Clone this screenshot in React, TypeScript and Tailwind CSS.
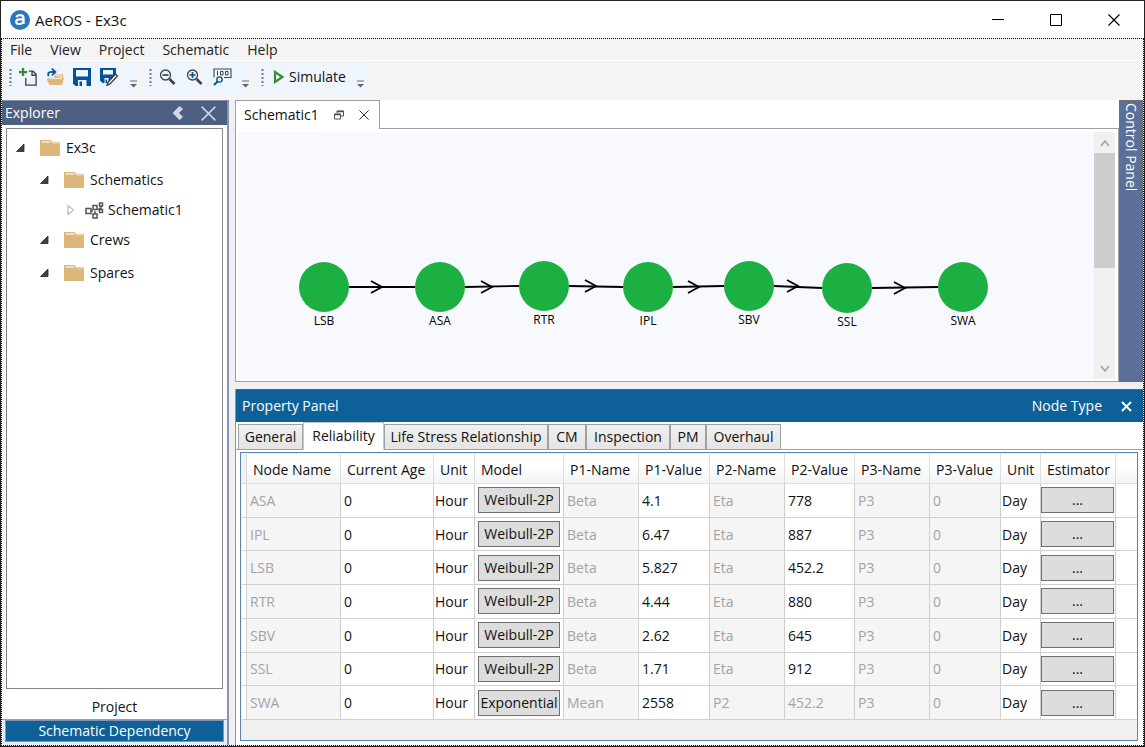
import React from 'react';
import clsx from 'clsx';

interface GridRow {
  name: string;
  model: string;
  p1Name: string;
  p1: string;
  p2Name: string;
  p2: string;
}

const rows: GridRow[] = [
  { name: 'ASA', model: 'Weibull-2P', p1Name: 'Beta', p1: '4.1', p2Name: 'Eta', p2: '778' },
  { name: 'IPL', model: 'Weibull-2P', p1Name: 'Beta', p1: '6.47', p2Name: 'Eta', p2: '887' },
  { name: 'LSB', model: 'Weibull-2P', p1Name: 'Beta', p1: '5.827', p2Name: 'Eta', p2: '452.2' },
  { name: 'RTR', model: 'Weibull-2P', p1Name: 'Beta', p1: '4.44', p2Name: 'Eta', p2: '880' },
  { name: 'SBV', model: 'Weibull-2P', p1Name: 'Beta', p1: '2.62', p2Name: 'Eta', p2: '645' },
  { name: 'SSL', model: 'Weibull-2P', p1Name: 'Beta', p1: '1.71', p2Name: 'Eta', p2: '912' },
  { name: 'SWA', model: 'Exponential', p1Name: 'Mean', p1: '2558', p2Name: 'P2', p2: '452.2' },
];

const headers = [
  'Node Name',
  'Current Age',
  'Unit',
  'Model',
  'P1-Name',
  'P1-Value',
  'P2-Name',
  'P2-Value',
  'P3-Name',
  'P3-Value',
  'Unit',
  'Estimator',
];

// Centres of the nodes on the schematic canvas, arrow = x of the arrow tip on the way to the next one
const nodes = [
  { label: 'LSB', x: 86, y: 155, arrow: 144 },
  { label: 'ASA', x: 202, y: 155, arrow: 254 },
  { label: 'RTR', x: 306, y: 154, arrow: 358 },
  { label: 'IPL', x: 410, y: 155, arrow: 461 },
  { label: 'SBV', x: 511, y: 154, arrow: 560 },
  { label: 'SSL', x: 609, y: 156, arrow: 667 },
  { label: 'SWA', x: 725, y: 155 },
];

const Logo = () => (
  <svg width="20" height="20" viewBox="0 0 20 20" aria-hidden="true">
    <circle cx="10" cy="10" r="10" fill="#2a75bb" />
    <path
      d="M6.2 7.2C7 5.7 8.3 5.2 10 5.2c2.400 0 3.600 1.100 3.600 3.300V14M13.400 9.300H9.300c-2 0-3.100.8-3.100 2.300s1 2.400 2.700 2.400c2.400 0 4.500-1.200 4.500-3.200"
      fill="none"
      stroke="#fff"
      strokeWidth="2.2"
    />
  </svg>
);

const NewIcon = () => (
  <svg width="18" height="18" viewBox="0 0 20 20" aria-hidden="true">
    <path d="M9.500 4H15l3.500 3.500V19h-11v-8.500l2-1.500z" fill="#f2f2f2" />
    <path d="M4.500 0v9M0 4.500h9" stroke="#388a34" strokeWidth="2.600" />
    <path d="M11 3.500h4.500L19 7v12H7.500v-8M14.500 3.500V8H19" fill="none" stroke="#424242" strokeWidth="1.500" />
  </svg>
);

const OpenIcon = () => (
  <svg width="18" height="18" viewBox="0 0 20 20" aria-hidden="true">
    <path d="M10 7h9v3.500h1L18 19H4l-3.500-7H3v-1.500h6z" fill="#dcb67a" />
    <path d="M4.500 11.500H17v-3h-6" fill="none" stroke="#f5e8d0" strokeWidth="1.300" />
    <path d="M3 9C1 5 4 3.800 9 4.500" fill="none" stroke="#00539c" strokeWidth="1.900" />
    <path d="m6.500.8 4 3.700-4 3.700" fill="none" stroke="#00539c" strokeWidth="1.900" />
  </svg>
);

const SaveIcon = () => (
  <svg width="18" height="18" viewBox="0 0 18 18" aria-hidden="true">
    <path d="M0 0h18v18H2.500L0 15.500z" fill="#00539c" />
    <path d="M3 2h12v6.500H3zM5 12h8.500v6H5z" fill="#f0f5fc" />
    <path d="M6.500 13.500H9V18H6.500z" fill="#00539c" />
  </svg>
);

const SaveAsIcon = () => (
  <svg width="18" height="18" viewBox="0 0 18 18" aria-hidden="true">
    <path d="M0 0h16v8l-7 7H2.500L0 12.500z" fill="#00539c" />
    <path d="M3 2h10v4.500H3zM4.500 10h4v5h-4z" fill="#f0f5fc" />
    <path d="M5.500 11.500H7V15H5.500z" fill="#00539c" />
    <path d="M8 14.200 15.500 6l2 2-7.500 8-3 1.300z" fill="#f4f8fd" stroke="#424242" strokeWidth="1.400" />
  </svg>
);

const ZoomIcon = ({ plus = false }: { plus?: boolean }) => (
  <svg width="18" height="18" viewBox="0 0 18 18" aria-hidden="true">
    <circle cx="6.500" cy="7" r="5" fill="#f4f4f8" stroke="#424242" strokeWidth="1.300" />
    <path d="m10.500 11 5 5" stroke="#424242" strokeWidth="2.600" />
    <path d={plus ? 'M3.500 7h6M6.500 4v6' : 'M3.500 7h6'} stroke="#00539c" strokeWidth="1.700" />
  </svg>
);

const ZoomResetIcon = () => (
  <svg width="19" height="18" viewBox="0 0 19 18" aria-hidden="true">
    <path d="M1 9.500V1h17v8.500h-7" fill="none" stroke="#424242" strokeWidth="1.100" />
    <path d="M4.500 3v4.500M7.500 3.500H10V7H7.500zM12.500 3.500H15V7h-2.500z" fill="none" stroke="#424242" strokeWidth="1" />
    <circle cx="6.500" cy="11.500" r="2.600" fill="none" stroke="#00539c" strokeWidth="1.400" />
    <path d="m4.500 13.500-3.500 3.500" stroke="#00539c" strokeWidth="2" />
  </svg>
);

const FolderIcon = () => (
  <svg width="20" height="18" viewBox="0 0 20 18" aria-hidden="true">
    <path d="M0 1h10.500l1.500 2H20v14H0z" fill="#dcb67a" />
    <path d="M1.500 3h9" stroke="#f8efdf" strokeWidth="1.400" />
    <path d="M12 4h8" stroke="#f3e2c4" strokeWidth="1" />
  </svg>
);

const SchematicIcon = () => (
  <svg width="19" height="17" viewBox="0 0 19 17" aria-hidden="true">
    <g fill="#fff" stroke="#555" strokeWidth="1.500">
      <path d="M6 9h2M10 7V5M10 9v3M13 8l2-2M16 4v4" fill="none" />
      <path d="M1 6.500h5v5H1zM8 3.500h4v4H8zM8 12h4v4H8zM14.500 1h3v3h-3zM14.500 7.500h3v3h-3z" />
    </g>
  </svg>
);

const Expander = ({ open = false }: { open?: boolean }) => (
  <svg width="10" height="12" viewBox="0 0 10 12" aria-hidden="true">
    {open ? (
      <path d="M8 2v7.500H.5z" fill="#404040" stroke="#262626" strokeWidth="0.800" />
    ) : (
      <path d="M2 1.500v9L7.500 6z" fill="#fff" stroke="#a0a0a0" strokeWidth="1" />
    )}
  </svg>
);

const Cross = ({ size, className }: { size: number; className: string }) => (
  <svg width={size} height={size} viewBox="0 0 12 12" className={className} aria-hidden="true">
    <path d="m.5.5 11 11M11.500.5l-11 11" fill="none" stroke="currentColor" strokeWidth="1.200" />
  </svg>
);

const Chevron = ({ down = false }: { down?: boolean }) => (
  <svg width="10" height="8" viewBox="0 0 10 8" aria-hidden="true">
    <path d={down ? 'm1 1 4 5 4-5' : 'm1 7 4-5 4 5'} fill="none" stroke="#a3a3a3" strokeWidth="1.700" />
  </svg>
);

interface ToolbarGroupProps {
  className?: string;
  children: React.ReactNode;
}

const ToolbarGroup = ({ className = '', children }: ToolbarGroupProps) => (
  <div role="toolbar" className={clsx('flex h-8 items-center rounded bg-[#eef5fd] pl-1', className)}>
    <svg width="3" height="18" viewBox="0 0 3 18" className="mr-[7px] shrink-0" aria-hidden="true">
      <path d="M1.500 1v17" stroke="#777" strokeWidth="2" strokeDasharray="2 2" />
    </svg>
    {children}
    <button type="button" aria-label="Toolbar options" className="mt-[14px] mr-[3px] ml-auto">
      <svg width="7" height="8" viewBox="0 0 7 8" aria-hidden="true">
        <path d="M0 1h7" stroke="#666" />
        <path d="M0 4h7L3.500 7.500z" fill="#666" />
      </svg>
    </button>
  </div>
);

const TitleBar = () => (
  <header className="flex h-[37px] shrink-0 items-center bg-white pl-[9px]">
    <Logo />
    <h1 className="ml-[5px] text-[15px]">AeROS - Ex3c</h1>
    <div className="ml-auto flex items-center gap-[46px] pr-6 text-black">
      <button type="button" aria-label="Minimize">
        <svg width="12" height="12" viewBox="0 0 12 12" aria-hidden="true">
          <path d="M0 5.500h12" stroke="currentColor" />
        </svg>
      </button>
      <button type="button" aria-label="Maximize">
        <svg width="12" height="12" viewBox="0 0 12 12" aria-hidden="true">
          <path d="M.5.5h11v11H.5z" fill="none" stroke="currentColor" />
        </svg>
      </button>
      <button type="button" aria-label="Close">
        <Cross size={12} className="text-black" />
      </button>
    </div>
  </header>
);

const Toolbar = () => (
  <div className="flex h-[39px] shrink-0 gap-[5px] pl-[3px]">
    <ToolbarGroup className="w-[135px]">
      <div className="flex gap-[9px]">
        <button type="button" aria-label="New"><NewIcon /></button>
        <button type="button" aria-label="Open"><OpenIcon /></button>
        <button type="button" aria-label="Save"><SaveIcon /></button>
        <button type="button" aria-label="Save as"><SaveAsIcon /></button>
      </div>
    </ToolbarGroup>
    <ToolbarGroup className="w-[107px]">
      <div className="flex gap-[9px]">
        <button type="button" aria-label="Zoom out"><ZoomIcon /></button>
        <button type="button" aria-label="Zoom in"><ZoomIcon plus /></button>
        <button type="button" aria-label="Zoom to 100"><ZoomResetIcon /></button>
      </div>
    </ToolbarGroup>
    <ToolbarGroup className="w-[110px]">
      <button type="button" className="flex items-center gap-1 pl-[2px]">
        <svg width="12" height="14" viewBox="0 0 12 14" aria-hidden="true">
          <path d="M2 2v10l7.500-5z" fill="#eef5fd" stroke="#388a34" strokeWidth="2.200" />
        </svg>
        Simulate
      </button>
    </ToolbarGroup>
  </div>
);

interface TreeItemProps {
  label: string;
  icon?: React.ReactNode;
  open?: boolean;
  className: string;
}

const TreeItem = ({ label, icon = <FolderIcon />, open = true, className }: TreeItemProps) => (
  <li role="treeitem" aria-expanded={open} className={clsx('flex items-center', className)}>
    <Expander open={open} />
    {icon}
    <span>{label}</span>
  </li>
);

const Explorer = () => (
  <aside className="flex w-[227px] shrink-0 flex-col border-r-2 border-[#8593b3] bg-white">
    <div className="flex h-[25px] shrink-0 items-center border-t border-[#8593b3] bg-[#4d6082] pl-[3px] text-white">
      <h2>Explorer</h2>
      <button type="button" aria-label="Collapse" className="ml-auto">
        <svg width="12" height="14" viewBox="0 0 12 14" aria-hidden="true">
          <path d="m7.500 0 3.500 3L7 7l4 4-3.500 3L.5 7z" fill="#cfd6e8" />
        </svg>
      </button>
      <button type="button" aria-label="Close explorer" className="mr-[11px] ml-[17px]">
        <Cross size={15} className="text-[#cfd6e8]" />
      </button>
    </div>
    <ul role="tree" className="mx-1 mt-[3px] flex-1 border border-[#828790] pt-[3px]">
      <TreeItem label="Ex3c" className="h-8 gap-[6px] pl-[9px] [&>svg:first-child]:mr-2" />
      <TreeItem label="Schematics" className="h-8 gap-[6px] pl-[33px] [&>svg:first-child]:mr-2" />
      <TreeItem label="Schematic1" open={false} icon={<SchematicIcon />} className="h-7 gap-1 pl-[59px] [&>svg:first-child]:mr-[5px]" />
      <TreeItem label="Crews" className="h-8 gap-[6px] pl-[33px] [&>svg:first-child]:mr-2" />
      <TreeItem label="Spares" className="h-[34px] gap-[6px] pl-[33px] [&>svg:first-child]:mr-2" />
    </ul>
    <div className="mt-1 flex shrink-0 flex-col">
      <button type="button" className="h-[27px] border-b border-[#a0a0a0] pt-[2px]">Project</button>
      <div className="bg-[#e6ebf8] px-[3px] pb-[3px]">
        <button type="button" className="h-[22px] w-full border border-[#8593b3] bg-[#0e6198] leading-5 text-white">
          Schematic Dependency
        </button>
      </div>
    </div>
  </aside>
);

const Schematic = () => (
  <svg className="h-full w-full" role="img" aria-label="Schematic1 diagram">
    {nodes.slice(0, -1).map((node, i) => (
      <g key={node.label} fill="none" stroke="#000" strokeWidth="1.800">
        <line x1={node.x + 25} y1={node.y} x2={nodes[i + 1].x - 25} y2={nodes[i + 1].y} />
        <path d={`M${(node.arrow ?? 0) - 11} ${node.y - 6}l11 6l-11 6`} />
      </g>
    ))}
    {nodes.map((node) => (
      <g key={node.label}>
        <circle cx={node.x} cy={node.y} r="25" fill="#1caf42" />
        <text x={node.x} y={node.y + 38} textAnchor="middle" fontSize="12" fill="#000">
          {node.label}
        </text>
      </g>
    ))}
  </svg>
);

const DocumentArea = () => (
  <section className="flex min-w-0 flex-1 flex-col bg-white">
    <div className="flex h-[29px] shrink-0">
      <div className="flex w-[145px] items-center border-t border-r border-l border-[#a0a0a0] pl-2">
        <span>Schematic1</span>
        <button type="button" aria-label="Float" className="ml-auto">
          <svg width="10" height="10" viewBox="0 0 10 10" aria-hidden="true">
            <path d="M3 3V1h6.500v5H7" fill="none" stroke="#555" />
            <path d="M3 1.500h6.500M.5 4.500H7" stroke="#555" strokeWidth="1.500" />
            <path d="M.5 4h6v5h-6z" fill="none" stroke="#555" />
          </svg>
        </button>
        <button type="button" aria-label="Close Schematic1" className="mr-[10px] ml-[15px]">
          <Cross size={10} className="text-[#333]" />
        </button>
      </div>
      <div className="flex-1 border-b border-[#a0a0a0]" />
    </div>
    <div className="flex min-h-0 flex-1 border-r border-b border-l border-[#a0a0a0] p-[2px] pt-[3px]">
      <div className="min-w-0 flex-1 bg-[#f8f9ff]">
        <Schematic />
      </div>
      <div className="mr-px flex w-[21px] flex-col bg-[#f0f0f0]">
        <button type="button" aria-label="Scroll up" className="flex h-[21px] items-center justify-center">
          <Chevron />
        </button>
        <div className="h-[115px] bg-[#cdcdcd]" />
        <button type="button" aria-label="Scroll down" className="mt-auto flex h-[21px] items-center justify-center">
          <Chevron down />
        </button>
      </div>
    </div>
  </section>
);

const tabs = ['General', 'Reliability', 'Life Stress Relationship', 'CM', 'Inspection', 'PM', 'Overhaul'];
const tabWidths = ['w-[65px]', 'w-[81px]', 'w-[164px]', 'w-[38px]', 'w-[84px]', 'w-[36px]', 'w-[75px]'];

const PropertyTabs = () => (
  <div role="tablist" className="flex h-7 shrink-0 items-end border-b border-[#a0a0a0] pl-[2px]">
    {tabs.map((tab, i) => {
      const active = tab === 'Reliability';
      return (
        <button
          key={tab}
          type="button"
          role="tab"
          aria-selected={active}
          className={clsx(
            'shrink-0 border whitespace-nowrap',
            tabWidths[i],
            active
              ? '-mb-px h-7 border-[#c8c8c8] border-b-white bg-white'
              : 'h-[25px] border-b-0 border-[#a0a0a0] bg-linear-to-b from-[#f0f0f0] to-[#e4e4e4]'
          )}
        >
          {tab}
        </button>
      );
    })}
  </div>
);

const Cell = ({ value, muted = false }: { value: string; muted?: boolean }) => (
  <td className={clsx('border-r border-b border-[#d0d0d0] px-[3px] pt-px pb-0', muted && 'bg-[#f5f5f5] text-[#a3a3a3]')}>
    {value}
  </td>
);

const PropertyGrid = () => (
  <div className="mt-[2px] mr-[5px] mb-1 ml-1 min-h-0 flex-1 overflow-hidden border border-[#5c84ac] bg-[#f0f0f0] pt-px pl-px">
    <table className="h-[266px] w-full table-fixed border-separate border-spacing-0 bg-white text-left">
      <colgroup>
        <col className="w-[5px]" />
        <col className="w-[94px]" />
        <col className="w-[93px]" />
        <col className="w-[41px]" />
        <col className="w-[89px]" />
        <col className="w-[75px]" />
        <col className="w-[71px]" />
        <col className="w-[75px]" />
        <col className="w-[70px]" />
        <col className="w-[75px]" />
        <col className="w-[71px]" />
        <col className="w-[40px]" />
        <col className="w-[75px]" />
        <col />
      </colgroup>
      <thead>
        <tr className="h-[30px]">
          <td className="border-r border-b border-[#d8d8d8] bg-[#f2f2f4] p-0" />
          {headers.map((header, i) => (
            <th
              key={i}
              scope="col"
              className="border-r border-b border-[#dcdee2] bg-linear-to-b from-white from-40% to-[#f1f3f6] pt-[2px] pr-0 pb-0 pl-[6px] font-normal whitespace-nowrap"
            >
              {header}
            </th>
          ))}
          <td className="border-b border-[#dcdee2] bg-linear-to-b from-white from-40% to-[#f1f3f6] p-0" />
        </tr>
      </thead>
      <tbody>
        {rows.map((row) => (
          <tr key={row.name}>
            <td className="border-r border-b border-[#d0d0d0] p-0" />
            <Cell value={row.name} muted />
            <Cell value="0" />
            <td className="border-r border-b border-[#d0d0d0] px-px pt-px pb-0">Hour</td>
            <td className="border-r border-b border-[#d0d0d0] px-[3px] py-0">
              <button
                type="button"
                className="block h-[26px] w-[82px] border border-[#707070] bg-[#ddd] text-center whitespace-nowrap"
              >
                {row.model}
              </button>
            </td>
            <Cell value={row.p1Name} muted />
            <Cell value={row.p1} />
            <Cell value={row.p2Name} muted />
            <Cell value={row.p2} muted={row.p2Name === 'P2'} />
            <Cell value="P3" muted />
            <Cell value="0" muted />
            <td className="border-r border-b border-[#d0d0d0] px-px pt-px pb-0">Day</td>
            <td className="border-r border-b border-[#d0d0d0] p-0">
              <button
                type="button"
                aria-label={`Estimator for ${row.name}`}
                className="block h-[26px] w-[73px] border border-[#707070] bg-[#ddd]"
              >
                ...
              </button>
            </td>
            <td className="border-b border-[#d0d0d0] p-0" />
          </tr>
        ))}
      </tbody>
    </table>
  </div>
);

const PropertyPanel = () => (
  <section className="flex h-[356px] shrink-0 flex-col border-l border-[#8593b3] bg-white">
    <div className="flex h-[33px] shrink-0 items-center border-t border-[#4d6082] bg-[#0e6198] pr-[11px] pl-[6px] text-white">
      <h2>Property Panel</h2>
      <span className="ml-auto">Node Type</span>
      <button type="button" aria-label="Close property panel" className="ml-[19px]">
        <svg width="11" height="11" viewBox="0 0 11 11" aria-hidden="true">
          <path d="m1 1 9 9M10 1l-9 9" stroke="#fff" strokeWidth="1.900" />
        </svg>
      </button>
    </div>
    <PropertyTabs />
    <PropertyGrid />
  </section>
);

export default function App() {
  return (
    <div className="flex h-screen min-h-[600px] flex-col border border-[#222] bg-[#f4f4f4] font-['Open_Sans','Noto_Sans',sans-serif] text-[14px] leading-5 text-[#111]">
      <TitleBar />
      <div className="flex min-h-0 flex-1 flex-col border border-dotted border-black">
        <nav className="flex h-[22px] shrink-0 items-center gap-[18px] border-b border-white pl-2 text-[#222]">
          {['File', 'View', 'Project', 'Schematic', 'Help'].map((item) => (
            <button key={item} type="button">{item}</button>
          ))}
        </nav>
        <Toolbar />
        <div className="flex min-h-0 flex-1 bg-[#f0f0f0]">
          <Explorer />
          <main className="ml-[6px] flex min-w-0 flex-1 flex-col gap-[7px]">
            <div className="flex min-h-0 flex-1">
              <DocumentArea />
              <div className="flex w-6 shrink-0 flex-col bg-[#5c6f99]">
                <button
                  type="button"
                  className="h-[94px] border border-[#707070] pt-[2px] text-left leading-5 whitespace-nowrap text-white [writing-mode:vertical-rl]"
                >
                  Control Panel
                </button>
              </div>
            </div>
            <PropertyPanel />
          </main>
        </div>
      </div>
    </div>
  );
}
